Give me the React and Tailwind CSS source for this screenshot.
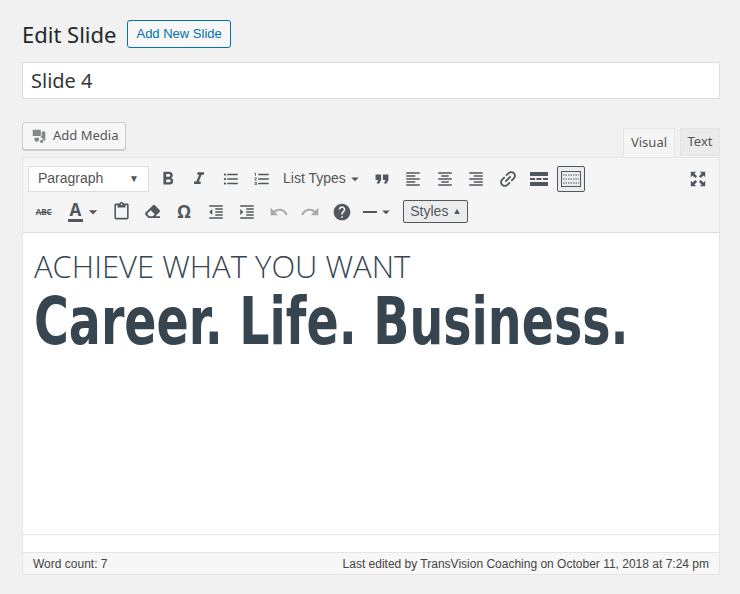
import React from "react";
import { MdFormatBold, MdFormatItalic, MdFormatListBulleted, MdFormatListNumbered, MdFormatQuote, MdFormatAlignLeft, MdFormatAlignCenter, MdFormatAlignRight, MdLink, MdContentPaste, MdFormatIndentDecrease, MdFormatIndentIncrease, MdUndo, MdRedo, MdHelp, MdArrowDropDown } from "react-icons/md";
import { FaEraser } from "react-icons/fa";

const ff = { fontFamily: '"Noto Sans","Open Sans",sans-serif' };
const I = ({ children, cls = "" }) => (
  <div className={"w-[31.5px] h-[26px] flex items-center justify-center text-[#50575e] " + cls}>{children}</div>
);

export default function App() {
  return (
    <div className="w-[740px] h-[594px] bg-[#f1f1f1] pl-[22px] pr-[20px] pt-[18px]" style={ff}>
      <div className="flex items-center gap-[11px]">
        <h1 className="text-[22px] text-[#23282d] leading-[32px]">Edit Slide</h1>
        <div className="border border-[#0073aa] rounded-[3px] bg-[#f7f7f7] text-[#0073aa] text-[13px] px-[8px] h-[28px] flex items-center" style={{ fontFamily: '"Liberation Sans",sans-serif' }}>Add New Slide</div>
      </div>
      <div className="mt-[12px] h-[37px] bg-white border border-[#ddd] flex items-center px-[8px] text-[20px] text-[#32373c]">Slide 4</div>
      <div className="mt-[23px] flex items-end justify-between">
        <div className="mb-[7px] h-[28px] border border-[#ccc] rounded-[3px] bg-[#f7f7f7] flex items-center px-[7px] gap-[5px] text-[13px] text-[#555] shadow-[0_1px_0_#ccc]">
          <svg width="18" height="18" viewBox="0 0 20 20" fill="#82878c"><path d="M3 3h9v7H3zM13 5h4v10h-3v-3h-2v-2h1zM5 12h5v2c0 1.5-1 2.5-2.5 2.5S5 15.5 5 14z"/><circle cx="13" cy="16" r="1.8"/></svg>
          Add Media
        </div>
        <div className="flex gap-[5px]">
          <div className="h-[29px] w-[52px] bg-[#f5f5f5] border border-[#e5e5e5] border-b-0 flex items-center justify-center text-[13px] text-[#555]">Visual</div>
          <div className="h-[28px] w-[40px] bg-[#ebebeb] border border-[#e5e5e5] flex items-center justify-center text-[13px] text-[#555]">Text</div>
        </div>
      </div>
      <div className="border border-[#e5e5e5] bg-white">
        <div className="bg-[#f5f5f5] border-b border-[#dcdcde] px-[5px] pt-[7px] pb-[7px]">
          <div className="flex items-center h-[27px]">
            <div className="w-[121px] h-[26px] bg-white border border-[#ddd] flex items-center justify-between px-[9px] text-[14px] text-[#555] mr-[3px]" style={{ fontFamily: '"Liberation Sans",sans-serif' }}>Paragraph<span className="text-[10px]">▼</span></div>
            <I><MdFormatBold size={22} /></I>
            <I><MdFormatItalic size={20} /></I>
            <I><MdFormatListBulleted size={18} /></I>
            <I><MdFormatListNumbered size={18} /></I>
            <div className="h-[26px] flex items-center pl-[5px] pr-[2px] text-[14px] text-[#555]" style={{ fontFamily: '"Liberation Sans",sans-serif' }}>List Types<MdArrowDropDown size={18} /></div>
            <I><MdFormatQuote size={22} /></I>
            <I><MdFormatAlignLeft size={18} /></I>
            <I><MdFormatAlignCenter size={18} /></I>
            <I><MdFormatAlignRight size={18} /></I>
            <I><MdLink size={22} style={{ transform: "rotate(-45deg)" }} /></I>
            <I><svg width="18" height="14" viewBox="0 0 18 14" fill="#50575e"><rect x="0" y="0" width="18" height="4"/><rect x="0" y="6" width="5" height="2"/><rect x="6.5" y="6" width="5" height="2"/><rect x="13" y="6" width="5" height="2"/><rect x="0" y="10" width="18" height="4"/></svg></I>
            <div className="ml-[2px] w-[28px] h-[26px] border border-[#50575e] rounded-[2px] bg-[#ececec] flex items-center justify-center">
              <svg width="20" height="16" viewBox="0 0 20 16" fill="none" stroke="#50575e"><rect x="0.5" y="0.5" width="19" height="15" /><path d="M2 4h16M2 8h16M2 12h16" strokeDasharray="1.5 1" /></svg>
            </div>
            <div className="flex-1" />
            <I><svg width="18" height="18" viewBox="0 0 20 20" fill="#50575e"><path d="M2 2h6L6 4l3 3-2 2-3-3-2 2zM18 2v6l-2-2-3 3-2-2 3-3-2-2zM2 18v-6l2 2 3-3 2 2-3 3 2 2zM18 18h-6l2-2-3-3 2-2 3 3 2-2z"/></svg></I>
          </div>
          <div className="flex items-center h-[27px] mt-[6px]">
            <I><span className="text-[8px] line-through font-bold">ABC</span></I>
            <div className="h-[26px] flex items-center pl-[8px] pr-[2px] text-[#50575e]">
              <span className="text-[17px] font-bold border-b-[3px] border-[#50575e] leading-[18px] px-[2px]">A</span>
              <MdArrowDropDown size={20} />
            </div>
            <I><MdContentPaste size={19} /></I>
            <I><FaEraser size={15} /></I>
            <I><span className="text-[18px] font-bold">Ω</span></I>
            <I><MdFormatIndentDecrease size={18} /></I>
            <I><MdFormatIndentIncrease size={18} /></I>
            <I cls="!text-[#a7aaad]"><MdUndo size={20} /></I>
            <I cls="!text-[#a7aaad]"><MdRedo size={20} /></I>
            <I><MdHelp size={20} /></I>
            <div className="h-[26px] flex items-center px-[6px] text-[#50575e]"><span className="w-[14px] h-[2px] bg-[#50575e]" /><MdArrowDropDown size={18} /></div>
            <div className="ml-[2px] h-[23px] border border-[#50575e] rounded-[2px] bg-[#ececec] flex items-center px-[6px] gap-[4px] text-[14px] text-[#50575e]" style={{ fontFamily: '"Liberation Sans",sans-serif' }}>Styles<span className="text-[9px]">▲</span></div>
          </div>
        </div>
        <div className="h-[301px] px-[11px] pt-[13px]">
          <div className="text-[31px] text-[#36454f] leading-[40px]" style={{ fontFamily: '"Open Sans",sans-serif', fontWeight: 300 }}>ACHIEVE WHAT YOU WANT</div>
          <div className="inline-block text-[66px] font-bold text-[#36454f] leading-[72px] whitespace-nowrap" style={{ fontFamily: '"DejaVu Sans Condensed","DejaVu Sans",sans-serif', transform: "scaleX(0.8)", transformOrigin: "left" }}>Career. Life. Business.</div>
        </div>
        <div className="h-[18px] bg-white border-t border-[#e5e5e5]" />
        <div className="h-[22px] bg-[#f7f7f7] border-t border-[#e5e5e5] flex items-center justify-between px-[10px] text-[12px] text-[#444]" style={{ fontFamily: '"Liberation Sans",sans-serif' }}>
          <span>Word count: 7</span>
          <span>Last edited by TransVision Coaching on October 11, 2018 at 7:24 pm</span>
        </div>
      </div>
    </div>
  );
}
